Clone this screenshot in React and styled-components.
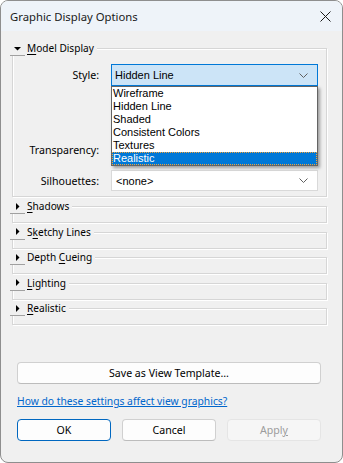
import React from 'react';
import styled, { createGlobalStyle } from 'styled-components';

const uiFont = `"Segoe UI", "Noto Sans", "Open Sans", sans-serif`;
const listFont = `Tahoma, "Liberation Sans", Arial, sans-serif`;

const GlobalStyle = createGlobalStyle`
  html, body { margin: 0; padding: 0; background: #ffffff; }
  * { box-sizing: border-box; }
`;

const styles = ['Wireframe', 'Hidden Line', 'Shaded', 'Consistent Colors', 'Textures', 'Realistic'];

const collapsed = [
  { pre: '', key: 'S', post: 'hadows' },
  { pre: 'S', key: 'k', post: 'etchy Lines' },
  { pre: 'Depth ', key: 'C', post: 'ueing' },
  { pre: '', key: 'L', post: 'ighting' },
  { pre: '', key: 'R', post: 'ealistic' },
];

const Chevron = () => (
  <svg width="9" height="5" viewBox="0 0 9 5">
    <polyline points="0.5,0.5 4.5,4.5 8.5,0.5" fill="none" stroke="#606060" strokeWidth="1" />
  </svg>
);

const Arrow = ({ open }) => (
  <svg width="7" height="7" viewBox="0 0 7 7">
    {open ? <polygon points="0,2 7,2 3.5,5.5" fill="#000" /> : <polygon points="2,0 5.5,3.5 2,7" fill="#000" />}
  </svg>
);

const GroupHeader = ({ open, children }) => (
  <Header>
    <Expander>
      <Arrow open={open} />
    </Expander>
    <Legend>{children}</Legend>
  </Header>
);

const App = () => (
  <>
    <GlobalStyle />
    <Window>
      <TitleBar>
        <span>Graphic Display Options</span>
        <svg width="11" height="11" viewBox="0 0 11 11">
          <path d="M0.5 0.5 L10.5 10.5 M10.5 0.5 L0.5 10.5" stroke="#1a1a1a" strokeWidth="1" />
        </svg>
      </TitleBar>
      <Body>
        <GroupBox height={149}>
          <GroupHeader open>
            <u>M</u>odel Display
          </GroupHeader>
          <FieldRow top={8}>
            <Label>Style:</Label>
            <ComboWrap>
              <Combo active>
                <span>Hidden Line</span>
                <Chevron />
              </Combo>
              <DropList>
                {styles.map(s => (
                  <ListItem key={s} selected={s === 'Realistic'}>
                    {s}
                  </ListItem>
                ))}
              </DropList>
            </ComboWrap>
          </FieldRow>
          <FieldRow top={53}>
            <Label>Transparency:</Label>
            <div />
          </FieldRow>
          <FieldRow top={9} short>
            <Label>Silhouettes:</Label>
            <Combo>
              <span>&lt;none&gt;</span>
              <Chevron />
            </Combo>
          </FieldRow>
        </GroupBox>
        {collapsed.map(g => (
          <GroupBox key={g.post} height={17} gap={g.key === 'S' ? 9 : 8.6}>
            <GroupHeader>
              {g.pre}
              <u>{g.key}</u>
              {g.post}
            </GroupHeader>
          </GroupBox>
        ))}
      </Body>
      <Footer>
        <Button>Save as View Template…</Button>
        <HelpLink href="#">How do these settings affect view graphics?</HelpLink>
        <ButtonRow>
          <Button primary>OK</Button>
          <Button>Cancel</Button>
          <Button disabled>
            Appl<u>y</u>
          </Button>
        </ButtonRow>
      </Footer>
    </Window>
  </>
);

export default App;

const Window = styled.div`
  width: 343px;
  height: 463px;
  display: flex;
  flex-direction: column;
  border: 1px solid #8e8e8e;
  border-radius: 8px;
  overflow: hidden;
  background: #f0f0f0;
  font-family: ${uiFont};
  font-size: 10.6px;
  color: #000;
`;

const TitleBar = styled.div`
  height: 30px;
  flex-shrink: 0;
  display: flex;
  align-items: center;
  justify-content: space-between;
  padding: 0 11px 0 9px;
  background: #eef3f9;
  color: #1a1a1a;
  font-size: 11.3px;
`;

const Body = styled.div`
  padding: 17px 15px 0 11px;
`;

const GroupBox = styled.div`
  height: ${({ height }) => height}px;
  margin-top: ${({ gap }) => gap || 0}px;
  border: 1px solid #d6d6d6;
  box-shadow: 1px 1px 0 #ffffff, inset 1px 1px 0 #ffffff;
`;

const Header = styled.div`
  display: flex;
  width: max-content;
  align-items: center;
  height: 15px;
  margin: -8px 0 0 -3px;
  padding-right: 3px;
  background: #f0f0f0;
`;

const Expander = styled.div`
  width: 15px;
  height: 15px;
  display: flex;
  align-items: center;
  justify-content: center;
  border-bottom: 1px solid #a0a0a0;
  background: #f0f0f0;
`;

const Legend = styled.span`
  margin-left: 2px;
  line-height: 15px;
  font-size: 10.1px;
  white-space: nowrap;
  u { text-decoration-thickness: 1px; text-underline-offset: 2px; }
`;

const FieldRow = styled.div`
  display: grid;
  grid-template-columns: 86px 207px;
  column-gap: 12px;
  align-items: center;
  height: ${({ short }) => (short ? 21 : 22)}px;
  margin-top: ${({ top }) => top}px;
`;

const Label = styled.span`
  text-align: right;
  white-space: nowrap;
`;

const ComboWrap = styled.div`
  position: relative;
  height: 100%;
`;

const Combo = styled.div`
  height: 100%;
  display: flex;
  align-items: center;
  justify-content: space-between;
  padding: 0 9px 0 ${({ active }) => (active ? 3 : 4)}px;
  border: 1px solid ${({ active }) => (active ? '#0078d7' : '#d9d9d9')};
  background: ${({ active }) => (active ? '#cce4f7' : '#ffffff')};
  font-family: ${listFont};
  font-size: 11px;
`;

const DropList = styled.div`
  position: absolute;
  top: 100%;
  left: 0;
  width: 207px;
  z-index: 2;
  border: 1px solid #646464;
  background: #ffffff;
  box-shadow: 2px 2px 3px rgba(0, 0, 0, 0.35);
  font-family: ${listFont};
  font-size: 11px;
`;

const ListItem = styled.div`
  height: 13px;
  line-height: 13px;
  padding-left: 1px;
  background: ${({ selected }) => (selected ? '#0078d7' : 'transparent')};
  color: ${({ selected }) => (selected ? '#ffffff' : '#000000')};
  outline: ${({ selected }) => (selected ? '1px dotted #f2a33a' : 'none')};
  outline-offset: -1px;
`;

const Footer = styled.div`
  margin-top: auto;
  padding: 0 21px 21px 16px;
  display: flex;
  flex-direction: column;
`;

const Button = styled.button`
  height: 22px;
  padding: 0;
  border: 1px solid ${({ primary, disabled }) => (primary ? '#0067c0' : disabled ? '#e5e5e5' : '#d0d0d0')};
  border-bottom-color: ${({ primary, disabled }) => (primary ? '#0067c0' : disabled ? '#e5e5e5' : '#bcbcbc')};
  border-radius: 4px;
  background: ${({ disabled }) => (disabled ? '#f6f6f6' : '#fdfdfd')};
  color: ${({ disabled }) => (disabled ? '#9c9c9c' : '#000')};
  font-family: ${uiFont};
  font-size: 10.6px;
`;

const HelpLink = styled.a`
  margin-top: 8px;
  height: 18px;
  line-height: 18px;
  font-size: 10.3px;
  color: #0066cc;
  text-decoration: underline;
  white-space: nowrap;
`;

const ButtonRow = styled.div`
  display: grid;
  grid-template-columns: repeat(3, 1fr);
  column-gap: 11px;
  margin-top: 9px;
`;
